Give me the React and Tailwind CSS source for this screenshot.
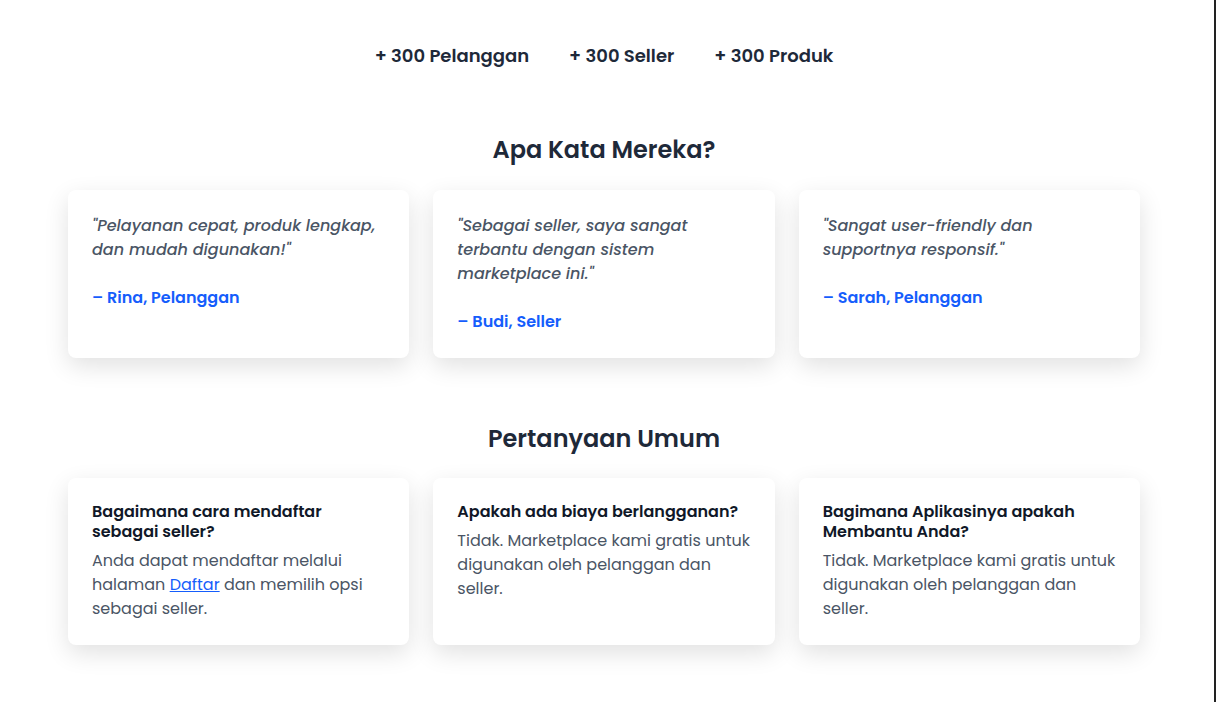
const testimonials = [
  { quote: '"Pelayanan cepat, produk lengkap, dan mudah digunakan!"', author: "– Rina, Pelanggan" },
  { quote: '"Sebagai seller, saya sangat terbantu dengan sistem marketplace ini."', author: "– Budi, Seller" },
  { quote: '"Sangat user-friendly dan supportnya responsif."', author: "– Sarah, Pelanggan" },
];

const faqs = [
  {
    q: "Bagaimana cara mendaftar sebagai seller?",
    a: (
      <>
        Anda dapat mendaftar melalui halaman{" "}
        <a href="#" className="text-blue-600 underline">
          Daftar
        </a>{" "}
        dan memilih opsi sebagai seller.
      </>
    ),
  },
  {
    q: "Apakah ada biaya berlangganan?",
    a: "Tidak. Marketplace kami gratis untuk digunakan oleh pelanggan dan seller.",
  },
  {
    q: "Bagimana Aplikasinya apakah Membantu Anda?",
    a: "Tidak. Marketplace kami gratis untuk digunakan oleh pelanggan dan seller.",
  },
];

export default function App() {
  return (
    <div
      className="flex min-h-screen bg-white text-gray-800"
      style={{ fontFamily: "Poppins, 'Open Sans', sans-serif" }}
    >
      <main className="w-[1208px] pb-14">
        <div className="max-w-6xl mx-auto px-10">
          {/* Stats */}
          <div className="pt-[42px] flex justify-center gap-10 text-lg font-semibold text-gray-800">
            <span>+ 300 Pelanggan</span>
            <span>+ 300 Seller</span>
            <span>+ 300 Produk</span>
          </div>

          {/* Testimonials */}
          <h2 className="mt-[64px] mb-6 text-2xl font-semibold text-center text-gray-800">
            Apa Kata Mereka?
          </h2>
          <div className="grid grid-cols-3 gap-6">
            {testimonials.map((t) => (
              <div
                key={t.author}
                className="bg-white rounded-lg shadow-[0_8px_24px_rgba(0,0,0,0.12)] p-6"
              >
                <p className="italic font-medium text-gray-600 leading-6">{t.quote}</p>
                <p className="mt-6 font-semibold text-blue-600">{t.author}</p>
              </div>
            ))}
          </div>

          {/* FAQ */}
          <h2 className="mt-[65px] mb-[23px] text-2xl font-semibold text-center text-gray-800">
            Pertanyaan Umum
          </h2>
          <div className="grid grid-cols-3 gap-6">
            {faqs.map((f) => (
              <div
                key={f.q}
                className="bg-white rounded-lg shadow-[0_8px_24px_rgba(0,0,0,0.12)] p-6"
              >
                <h3 className="font-semibold text-gray-900 leading-5">{f.q}</h3>
                <p className="mt-[7px] text-gray-600 leading-6">{f.a}</p>
              </div>
            ))}
          </div>
        </div>
      </main>
      <div className="flex-1 border-r-2 border-[#222]" />
    </div>
  );
}
